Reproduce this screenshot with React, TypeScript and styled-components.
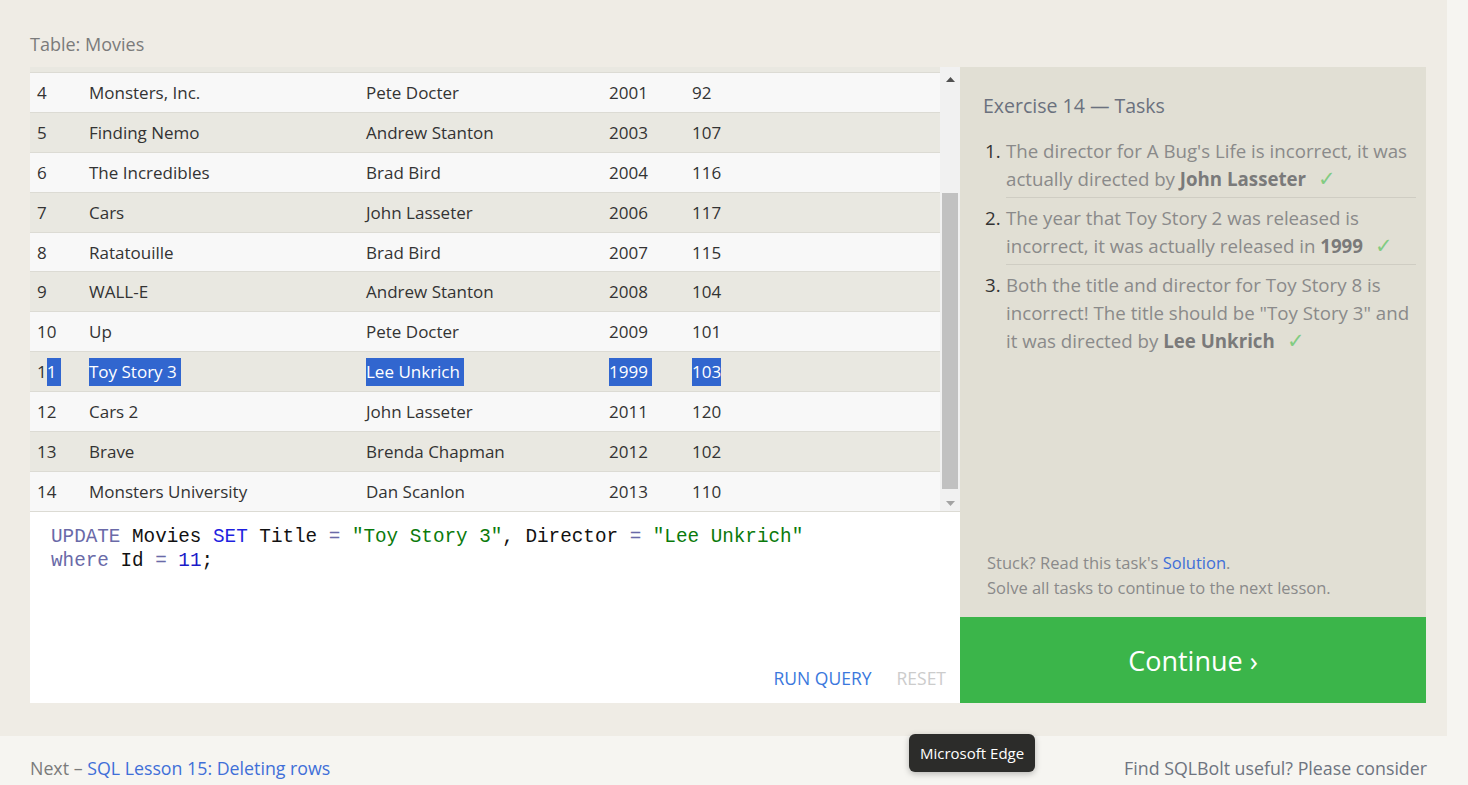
import React from "react";
import styled, { createGlobalStyle } from "styled-components";

const GlobalStyle = createGlobalStyle`
  html, body { margin: 0; padding: 0; }
  body {
    background: #f6f5f1;
    font-family: "Open Sans", "Noto Sans", sans-serif;
    width: 1468px;
    height: 785px;
    overflow: hidden;
  }
`;

const Page = styled.div`
  position: relative;
  width: 1468px;
  height: 785px;
`;

const Main = styled.section`
  width: 1447px;
  height: 736px;
  background: #efece5;
  box-sizing: border-box;
  padding: 30px 0 0 30px;
`;

const TableLabel = styled.div`
  font-size: 18px;
  color: #7b7b7b;
  height: 37px;
  line-height: 28px;
`;

const Workspace = styled.div`
  display: flex;
  width: 1396px;
  height: 636px;
`;

const LeftPanel = styled.div`
  width: 930px;
  display: flex;
  flex-direction: column;
  background: #fff;
`;

const TableViewport = styled.div`
  display: flex;
  height: 444px;
  overflow: hidden;
`;

const Rows = styled.div`
  flex: 1;
  display: flex;
  flex-direction: column;
`;

const RowStub = styled.div`
  height: 5px;
  flex: none;
  background: #e9e8e1;
`;

const Row = styled.div<{ $alt: boolean }>`
  display: grid;
  grid-template-columns: 52px 277px 243px 83px 1fr;
  height: 38.9px;
  flex: none;
  align-items: center;
  border-top: 1px solid #dcdbd4;
  background: ${(p) => (p.$alt ? "#e9e8e1" : "#f8f8f8")};
  font-size: 17px;
  color: #333;
`;

const Cell = styled.div`
  padding-left: 7px;
  white-space: nowrap;
`;

const Sel = styled.span`
  background: #3166cf;
  color: #fff;
  padding: 2px 0 3px;
`;

const Scrollbar = styled.div`
  width: 20px;
  background: #f1f1f1;
  display: flex;
  flex-direction: column;
  align-items: center;
`;

const ScrollArrow = styled.div<{ $down?: boolean }>`
  height: 16px;
  width: 100%;
  display: flex;
  align-items: center;
  justify-content: center;
  margin-top: ${(p) => (p.$down ? "2px" : "4px")};
`;

const ScrollTrack = styled.div`
  flex: 1;
  width: 100%;
  display: flex;
  flex-direction: column;
  padding: 0 2px;
  box-sizing: border-box;
`;

const ScrollThumb = styled.div`
  margin-top: 106px;
  height: 296px;
  background: #c1c1c1;
`;

const Editor = styled.div`
  flex: 1;
  border-top: 1px solid #dcdbd4;
  display: flex;
  flex-direction: column;
  padding: 13px 14px 13px 21px;
  box-sizing: border-box;
`;

const Code = styled.pre`
  margin: 0;
  flex: 1;
  font-family: "Liberation Mono", "DejaVu Sans Mono", monospace;
  font-size: 19.3px;
  line-height: 24px;
  color: #111;
`;

const Tok = styled.span<{ $c: string }>`
  color: ${(p) => p.$c};
`;

const EditorActions = styled.div`
  display: flex;
  justify-content: flex-end;
  gap: 25px;
  font-size: 17.5px;
`;

const ActionLink = styled.span<{ $disabled?: boolean }>`
  color: ${(p) => (p.$disabled ? "#cccccc" : "#3b78dd")};
`;

const RightPanel = styled.div`
  width: 466px;
  display: flex;
  flex-direction: column;
`;

const TaskBox = styled.div`
  flex: 1;
  background: #e1dfd4;
  padding: 25px 10px 17px 23px;
  box-sizing: border-box;
  display: flex;
  flex-direction: column;
`;

const TaskHeading = styled.h3`
  margin: 0 0 12px;
  font-weight: 400;
  font-size: 19.5px;
  line-height: 28px;
  color: #6b717e;
`;

const TaskList = styled.ol`
  margin: 0;
  padding: 0 0 0 23px;
  list-style: none;
`;

const TaskItem = styled.li`
  position: relative;
  padding: 5px 0 4px;
  font-size: 18.7px;
  line-height: 28px;
  color: #8a8a8a;
  & + & {
    border-top: 1px solid #cfcdc3;
    padding-top: 6px;
  }
`;

const TaskNum = styled.span`
  position: absolute;
  left: -21px;
  color: #333;
`;

const Strong = styled.b`
  color: #7a7a7a;
`;

const Check = styled.span`
  color: #82cc82;
  margin-left: 12px;
  font-size: 21px;
  line-height: 20px;
`;

const Spacer = styled.div`
  flex: 1;
`;

const Hint = styled.p`
  margin: 0;
  padding-left: 4px;
  font-size: 16.5px;
  line-height: 25px;
  color: #8a8a8a;
`;

const Link = styled.a`
  color: #3f6fd8;
  text-decoration: none;
`;

const ContinueButton = styled.div`
  height: 86px;
  background: #3bb54a;
  color: #fff;
  font-size: 27px;
  display: flex;
  align-items: center;
  justify-content: center;
`;

const Footer = styled.footer`
  display: flex;
  justify-content: space-between;
  padding: 20px 41px 0 30px;
  font-size: 17.8px;
  color: #7b7b7b;
`;

const FooterRight = styled.span`
  color: #6e7480;
`;

const Tooltip = styled.div`
  position: absolute;
  left: 909px;
  top: 734px;
  height: 38px;
  padding: 0 11px;
  box-sizing: border-box;
  display: flex;
  align-items: center;
  background: #2c2c2a;
  color: #fff;
  font-size: 15px;
  border-radius: 6px;
  box-shadow: 0 2px 6px rgba(0, 0, 0, 0.25);
`;

type Movie = [number, string, string, number, number];

const movies: Movie[] = [
  [4, "Monsters, Inc.", "Pete Docter", 2001, 92],
  [5, "Finding Nemo", "Andrew Stanton", 2003, 107],
  [6, "The Incredibles", "Brad Bird", 2004, 116],
  [7, "Cars", "John Lasseter", 2006, 117],
  [8, "Ratatouille", "Brad Bird", 2007, 115],
  [9, "WALL-E", "Andrew Stanton", 2008, 104],
  [10, "Up", "Pete Docter", 2009, 101],
  [11, "Toy Story 3", "Lee Unkrich", 1999, 103],
  [12, "Cars 2", "John Lasseter", 2011, 120],
  [13, "Brave", "Brenda Chapman", 2012, 102],
  [14, "Monsters University", "Dan Scanlon", 2013, 110],
];

const KW = "#6a6aa8";
const KW2 = "#1f1fe0";
const STR = "#0b7a0b";
const NUM = "#1a1ac8";

export default function App() {
  return (
    <Page>
      <GlobalStyle />
      <Main>
        <TableLabel>Table: Movies</TableLabel>
        <Workspace>
          <LeftPanel>
            <TableViewport>
              <Rows>
                <RowStub />
                {movies.map((m, i) => {
                  const selected = m[0] === 11;
                  return (
                    <Row key={m[0]} $alt={i % 2 === 1}>
                      {selected ? (
                        <>
                          <Cell>
                            1<Sel>1&nbsp;</Sel>
                          </Cell>
                          <Cell>
                            <Sel>{m[1]}&nbsp;</Sel>
                          </Cell>
                          <Cell>
                            <Sel>{m[2]}&nbsp;</Sel>
                          </Cell>
                          <Cell>
                            <Sel>{m[3]}&nbsp;</Sel>
                          </Cell>
                          <Cell>
                            <Sel>{m[4]}</Sel>
                          </Cell>
                        </>
                      ) : (
                        m.map((v, j) => <Cell key={j}>{v}</Cell>)
                      )}
                    </Row>
                  );
                })}
              </Rows>
              <Scrollbar>
                <ScrollArrow>
                  <svg width="9" height="5" viewBox="0 0 9 5">
                    <path d="M0 5 L4.5 0 L9 5 Z" fill="#505050" />
                  </svg>
                </ScrollArrow>
                <ScrollTrack>
                  <ScrollThumb />
                </ScrollTrack>
                <ScrollArrow $down>
                  <svg width="9" height="5" viewBox="0 0 9 5">
                    <path d="M0 0 L4.5 5 L9 0 Z" fill="#a3a3a3" />
                  </svg>
                </ScrollArrow>
              </Scrollbar>
            </TableViewport>
            <Editor>
              <Code>
                <Tok $c={KW}>UPDATE</Tok> Movies <Tok $c={KW2}>SET</Tok> Title{" "}
                <Tok $c={KW}>=</Tok> <Tok $c={STR}>"Toy Story 3"</Tok>, Director{" "}
                <Tok $c={KW}>=</Tok> <Tok $c={STR}>"Lee Unkrich"</Tok>
                {"\n"}
                <Tok $c={KW}>where</Tok> Id <Tok $c={KW}>=</Tok> <Tok $c={NUM}>11</Tok>;
              </Code>
              <EditorActions>
                <ActionLink>RUN QUERY</ActionLink>
                <ActionLink $disabled>RESET</ActionLink>
              </EditorActions>
            </Editor>
          </LeftPanel>
          <RightPanel>
            <TaskBox>
              <TaskHeading>Exercise 14 — Tasks</TaskHeading>
              <TaskList>
                <TaskItem>
                  <TaskNum>1.</TaskNum>
                  The director for A Bug's Life is incorrect, it was actually directed by{" "}
                  <Strong>John Lasseter</Strong>
                  <Check>✓</Check>
                </TaskItem>
                <TaskItem>
                  <TaskNum>2.</TaskNum>
                  The year that Toy Story 2 was released is incorrect, it was actually released in{" "}
                  <Strong>1999</Strong>
                  <Check>✓</Check>
                </TaskItem>
                <TaskItem>
                  <TaskNum>3.</TaskNum>
                  Both the title and director for Toy Story 8 is incorrect! The title should be "Toy
                  Story 3" and it was directed by <Strong>Lee Unkrich</Strong>
                  <Check>✓</Check>
                </TaskItem>
              </TaskList>
              <Spacer />
              <Hint>
                Stuck? Read this task's <Link>Solution</Link>.
              </Hint>
              <Hint>Solve all tasks to continue to the next lesson.</Hint>
            </TaskBox>
            <ContinueButton>Continue ›</ContinueButton>
          </RightPanel>
        </Workspace>
      </Main>
      <Footer>
        <span>
          Next – <Link>SQL Lesson 15: Deleting rows</Link>
        </span>
        <FooterRight>Find SQLBolt useful? Please consider</FooterRight>
      </Footer>
      <Tooltip>Microsoft Edge</Tooltip>
    </Page>
  );
}
